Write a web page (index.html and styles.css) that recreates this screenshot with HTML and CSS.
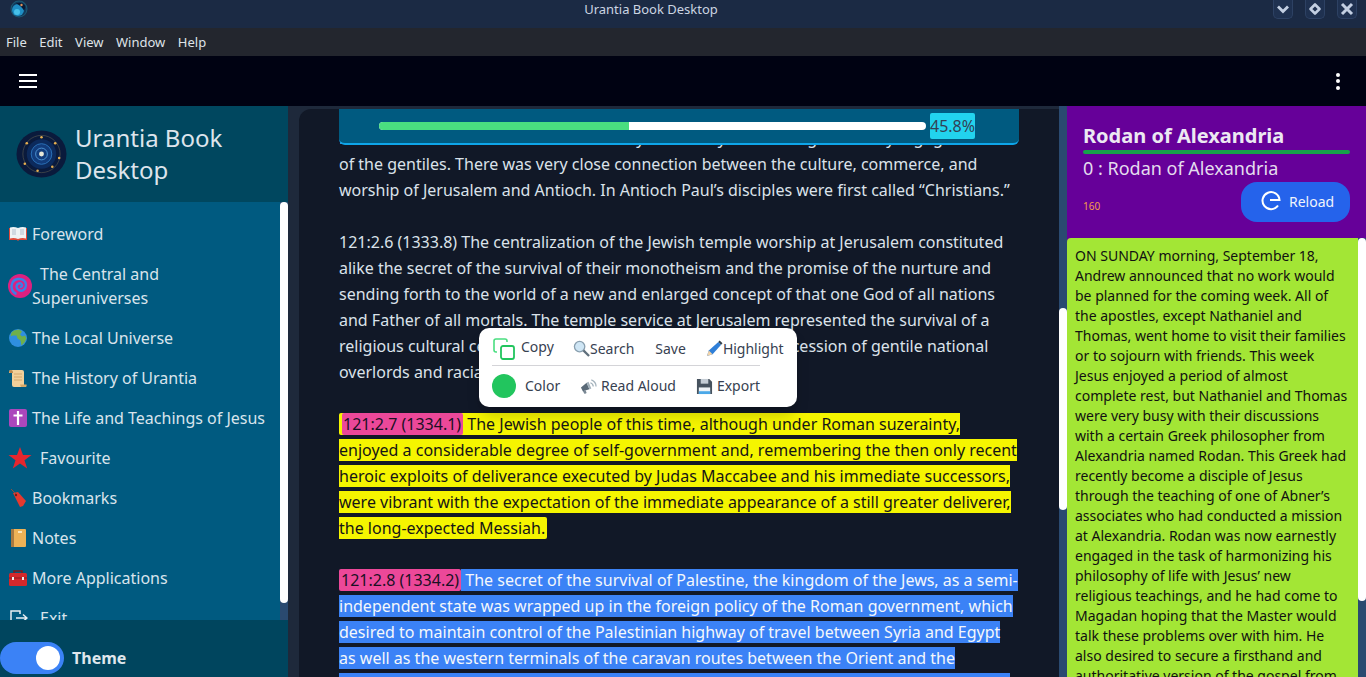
FILE: index.html

```html
<!DOCTYPE html>
<html lang="en">
<head>
    <meta charset="UTF-8">
    <title>Urantia Book Desktop</title>
    <link rel="stylesheet" href="styles.css">
</head>
<body>

<div class="titlebar">
    <svg class="app-icon" viewBox="0 0 18 18">
        <circle cx="9" cy="9" r="8.500" fill="#1d5a74"/>
        <circle cx="9" cy="9" r="7.500" fill="#123a5c"/>
        <circle cx="8" cy="10" r="6" fill="#1f8ec4"/>
        <circle cx="7" cy="12" r="3" fill="#46c0e8"/>
        <path d="M6 3.500q6-2 9 2 1 3-1 5-3-5-8-7z" fill="#0a1a34"/>
        <circle cx="11.500" cy="5" r="1.200" fill="#e0905a"/>
    </svg>
    <div class="app-name">Urantia Book Desktop</div>
    <div class="win-btns">
        <div class="win-btn">
            <svg viewBox="0 0 18 18"><path d="M4 6.500l5 5 5-5" fill="none" stroke="#c3cfe2" stroke-width="2.800"/></svg>
        </div>
        <div class="win-btn">
            <svg viewBox="0 0 18 18"><path d="M9 4.500L13.500 9 9 13.500 4.500 9z" fill="none" stroke="#c3cfe2" stroke-width="2.600" stroke-linejoin="round"/></svg>
        </div>
        <div class="win-btn">
            <svg viewBox="0 0 18 18"><path d="M4 4l10 10M14 4L4 14" fill="none" stroke="#c3cfe2" stroke-width="3"/></svg>
        </div>
    </div>
</div>

<div class="menubar">
    <span>File</span>
    <span>Edit</span>
    <span>View</span>
    <span>Window</span>
    <span>Help</span>
</div>

<div class="toolbar">
    <div class="burger"><i></i><i></i><i></i></div>
    <div class="kebab"><i></i><i></i><i></i></div>
</div>

<div class="main">

    <div class="sidebar">
        <div class="brand">
            <svg class="brand-logo" viewBox="0 0 52 48">
                <ellipse cx="26" cy="24" rx="25.500" ry="24" fill="#0a1a3c"/>
                <circle cx="26" cy="24" r="19" fill="none" stroke="#5a5a50" stroke-width=".6"/>
                <circle cx="26" cy="24" r="15" fill="#0c2a5c"/>
                <circle cx="26" cy="24" r="10.500" fill="#123c7c" stroke="#2a70b8"/>
                <circle cx="26" cy="24" r="6" fill="none" stroke="#4a90d0"/>
                <circle cx="26" cy="24" r="2.500" fill="#e8e8d8"/>
                <g fill="#e8b050">
                    <circle cx="26" cy="7" r="1.300"/><circle cx="40" cy="13" r="1.300"/>
                    <circle cx="44" cy="28" r="1.300"/><circle cx="37" cy="37" r="1.300"/>
                    <circle cx="22" cy="41" r="1.300"/><circle cx="9" cy="34" r="1.300"/>
                    <circle cx="11" cy="13" r="1.300"/>
                </g>
            </svg>
            <div class="brand-name">Urantia Book Desktop</div>
        </div>

        <div class="side-body">
            <div class="side-menu">
                <div class="side-item">
                    <svg class="ico" viewBox="0 0 20 20"><path d="M1 4h8.500l.5 1 .5-1H19v12h-8l-1 1-1-1H1z" fill="#e04a3a"/><path d="M2 3.500q4-1 8 .5 4-1.500 8-.5v11q-4-1-8 .5-4-1.500-8-.5z" fill="#eef2f4"/><path d="M4 6h4M4 8h4M4 10h4M12 6h4M12 8h4M12 10h4" stroke="#9ab" stroke-width=".7"/></svg>
                    <span>Foreword</span>
                </div>
                <div class="side-item">
                    <svg class="ico ico-big" viewBox="0 0 24 24"><circle cx="12" cy="12" r="12" fill="#dd2080"/><path d="M12 12.500c1.500 1 3 -1 1.500 -2.500s-5 -.5 -5 2.500 4 5.500 7 3.500 3.500 -7 .5 -9.500-9.500-2-11.500 2-1 10 4 11.500" fill="none" stroke="#3a80e8" stroke-width="2.400"/></svg>
                    <span class="indent">The Central and Superuniverses</span>
                </div>
                <div class="side-item">
                    <svg class="ico" viewBox="0 0 20 20"><circle cx="10" cy="10" r="9" fill="#2f8fe0"/><path d="M6 2.500l5-1 3 2-2 3 2 2 3-1 1.500 3-2 4-3 3-1-5-3-2-1-3-4 0-2 1 1-4z" fill="#6fb04a"/></svg>
                    <span>The Local Universe</span>
                </div>
                <div class="side-item">
                    <svg class="ico" viewBox="0 0 20 20"><path d="M3 2h11q2 0 2 2v13q0 2-2 2H6q-2 0-2-2V5H1V4q0-2 2-2z" fill="#f2d09a"/><path d="M13 19h5q1-1 .5-2.500H12z" fill="#d8a868"/><path d="M6 6h8M6 9h8M6 12h8" stroke="#d0a468" stroke-width=".9"/><path d="M1 4q0-2 2-2t2 3H2z" fill="#b98a50"/></svg>
                    <span>The History of Urantia</span>
                </div>
                <div class="side-item">
                    <svg class="ico" viewBox="0 0 20 20"><rect x="1" y="1" width="18" height="18" rx="2" fill="#ab47bc"/><path d="M10 3v14M5.500 7.500h9" stroke="#fff" stroke-width="2.200"/></svg>
                    <span>The Life and Teachings of Jesus</span>
                </div>
                <div class="side-item">
                    <svg class="ico ico-big" viewBox="0 0 24 24"><path d="M12 1l3 8h8.500l-7 5.200 2.700 8.300L12 17.400 4.800 22.500l2.700-8.300-7-5.200H9z" fill="#e5262e"/></svg>
                    <span class="indent">Favourite</span>
                </div>
                <div class="side-item">
                    <svg class="ico" viewBox="0 0 20 20"><path d="M5 5l5-1 8 9-3 5-3 1z" fill="#e5392f"/><circle cx="8" cy="7" r="1.200" fill="#7a1a14"/><path d="M3 1l5 5" stroke="#8a5040" stroke-width="1"/></svg>
                    <span>Bookmarks</span>
                </div>
                <div class="side-item">
                    <svg class="ico" viewBox="0 0 20 20"><rect x="3" y="1" width="15" height="18" rx="1" fill="#eeb256"/><rect x="3" y="1" width="3" height="18" fill="#a87a42"/><rect x="10" y="3" width="4" height="2" fill="#fbe6bc"/></svg>
                    <span>Notes</span>
                </div>
                <div class="side-item">
                    <svg class="ico" viewBox="0 0 20 20"><path d="M6 5V3h8v2" fill="none" stroke="#7a1c1c" stroke-width="1.500"/><rect x="1" y="5" width="18" height="13" rx="1.500" fill="#d4282c"/><path d="M1 10h18" stroke="#8c1a1c"/><rect x="4" y="9" width="2" height="3" fill="#eee"/><rect x="14" y="9" width="2" height="3" fill="#eee"/></svg>
                    <span>More Applications</span>
                </div>
                <div class="side-item">
                    <svg class="ico" viewBox="0 0 20 20"><path d="M12 6V3H3v14h9v-3M8 10h11M15 6.500l4 3.500-4 3.500" fill="none" stroke="#e8eef2" stroke-width="1.500"/></svg>
                    <span class="indent">Exit</span>
                </div>
            </div>
            <div class="scroll side-scroll"><div class="thumb"></div></div>
        </div>

        <div class="side-foot">
            <div class="toggle"><div class="knob"></div></div>
            <b>Theme</b>
        </div>
    </div>

    <div class="reader">
        <div class="page">
            <div class="progress">
                <div class="bar"><div class="bar-fill"></div></div>
                <div class="pct">45.8%</div>
            </div>

            <div class="text">
                <p>Paul and his associates went out from Syria to carry the message to the synagogues<br>of the gentiles. There was very close connection between the culture, commerce, and worship of Jerusalem and Antioch. In Antioch Paul’s disciples were first called “Christians.”</p>

                <p>121:2.6 (1333.8) The centralization of the Jewish temple worship at Jerusalem constituted alike the secret of the survival of their monotheism and the promise of the nurture and sending forth to the world of a new and enlarged concept of that one God of all nations and Father of all mortals. The temple service at Jerusalem represented the survival of a religious cultural center in the face of the long unbroken succession of gentile national overlords and racial persecutors.</p>

                <p><span class="hl-yellow"><span class="ref ref-first">121:2.7 (1334.1)</span> The Jewish people of this time, although under Roman suzerainty, enjoyed a considerable degree of self-government and, remembering the then only recent heroic exploits of deliverance executed by Judas Maccabee and his immediate successors, were vibrant with the expectation of the immediate appearance of a still greater deliverer, the long-expected Messiah.</span></p>

                <p><span class="ref">121:2.8 (1334.2)</span><span class="hl-blue"> The secret of the survival of Palestine, the kingdom of the Jews, as a semi-independent state was wrapped up in the foreign policy of the Roman government, which desired to maintain control of the Palestinian highway of travel between Syria and Egypt as well as the western terminals of the caravan routes between the Orient and the<br>Occident. Rome held this highway open and the Jews were left to govern themselves here</span></p>
            </div>

            <div class="popup">
                <div class="pop-row pop-top">
                    <div class="pop-copy">
                        <svg class="pop-copy-ico" viewBox="0 0 22 22"><path d="M4 14H3q-2 0-2-2V3q0-2 2-2h9q2 0 2 2v1" fill="none" stroke="#4ade80" stroke-width="1.600"/><rect x="8" y="8" width="13" height="13" rx="2" fill="none" stroke="#22c55e" stroke-width="1.800"/></svg>
                        <span>Copy</span>
                    </div>
                    <div class="pop-item">
                        <svg class="pop-ico" viewBox="0 0 18 18"><circle cx="7" cy="7" r="5.500" fill="#cfe6f5" stroke="#8aa0b0" stroke-width="1.400"/><path d="M11 11l6 6" stroke="#5f6f7c" stroke-width="2.400"/></svg>
                        <span>Search</span>
                    </div>
                    <div class="pop-item">Save</div>
                    <div class="pop-item">
                        <svg class="pop-ico" viewBox="0 0 18 18"><path d="M1 17l2-6L13 2l3 3-9 10z" fill="#2f7fd8"/><path d="M13 2l1.500-1.500 3 3L16 5z" fill="#33404c"/><path d="M1 17l2-6 4 4z" fill="#f2d3a8"/></svg>
                        <span>Highlight</span>
                    </div>
                </div>
                <div class="pop-row pop-bottom">
                    <div class="pop-item pop-color">
                        <div class="dot"></div>
                        <span>Color</span>
                    </div>
                    <div class="pop-item">
                        <svg class="pop-ico" viewBox="0 0 18 18"><path d="M1 10l6-5 3 7-7 2z" fill="#5a6a78"/><path d="M7 5l3 7 2-1-3-7z" fill="#a2b0ba"/><path d="M3 14l2 3 2-1-1-3z" fill="#7a8894"/><path d="M11 5q3 1 3 4M12 2q5 2 5 7" fill="none" stroke="#a4b2bc" stroke-width="1.300"/></svg>
                        <span>Read Aloud</span>
                    </div>
                    <div class="pop-item">
                        <svg class="pop-ico" viewBox="0 0 18 18"><path d="M1 1h13l3 3v13H1z" fill="#46525e"/><rect x="5" y="1" width="8" height="5" fill="#c4ccd4"/><rect x="3" y="10" width="12" height="7" fill="#eef2f5"/><rect x="3" y="14" width="12" height="3" fill="#4aa8e8"/></svg>
                        <span>Export</span>
                    </div>
                </div>
            </div>
        </div>
        <div class="scroll page-scroll"><div class="thumb"></div></div>
    </div>

    <div class="panel">
        <div class="panel-head">
            <div class="panel-title">Rodan of Alexandria</div>
            <div class="panel-line"></div>
            <div class="panel-sub">0 : Rodan of Alexandria</div>
            <div class="panel-row">
                <span class="count">160</span>
                <div class="reload">
                    <svg viewBox="0 0 22 22"><path d="M18 16.500a8.500 8.500 0 1 1 1.500-5.500H10" fill="none" stroke="#fff" stroke-width="2"/></svg>
                    <span>Reload</span>
                </div>
            </div>
        </div>
        <div class="panel-body">
            <div class="panel-text">ON SUNDAY morning, September 18, Andrew announced that no work would be planned for the coming week. All of the apostles, except Nathaniel and Thomas, went home to visit their families or to sojourn with friends. This week Jesus enjoyed a period of almost complete rest, but Nathaniel and Thomas were very busy with their discussions with a certain Greek philosopher from Alexandria named Rodan. This Greek had recently become a disciple of Jesus through the teaching of one of Abner’s associates who had conducted a mission at Alexandria. Rodan was now earnestly engaged in the task of harmonizing his philosophy of life with Jesus’ new religious teachings, and he had come to Magadan hoping that the Master would talk these problems over with him. He also desired to secure a firsthand and authoritative version of the gospel from</div>
            <div class="scroll panel-scroll"><div class="thumb"></div></div>
        </div>
    </div>

</div>

</body>
</html>
```

FILE: styles.css

```css
*{
    margin: 0;
    padding: 0;
    box-sizing: border-box;
}
html, body{
    height: 100%;
    overflow: hidden;
}
body{
    display: flex;
    flex-direction: column;
    font-family: "Noto Sans", sans-serif;
    font-size: 16px;
    line-height: 24px;
    background: #111827;
}

/* window chrome */
.titlebar{
    height: 28px;
    flex: none;
    position: relative;
    display: flex;
    justify-content: space-between;
    background: #1b2a44;
}
.app-icon{
    width: 18px;
    height: 18px;
    margin-left: 10px;
}
.app-name{
    position: absolute;
    left: 0;
    right: 64px;
    top: 0;
    text-align: center;
    font-size: 13px;
    line-height: 19px;
    color: #ccd5e2;
}
.win-btns{
    display: flex;
    gap: 12px;
    padding-right: 9px;
}
.win-btn{
    width: 20px;
    height: 19px;
    border: 1px solid #2d4163;
    border-top: 0;
    border-radius: 0 0 5px 5px;
    background: #1f3150;
}
.win-btn svg{
    display: block;
    width: 18px;
    height: 18px;
}
.menubar{
    height: 28px;
    flex: none;
    display: flex;
    gap: 12.500px;
    padding-left: 6px;
    background: #23262e;
    font-size: 13px;
    line-height: 28px;
    color: #dfe3e8;
}
.toolbar{
    height: 50px;
    flex: none;
    display: flex;
    justify-content: space-between;
    align-items: center;
    padding: 0 26px 0 19px;
    background: #000212;
}
.burger i{
    display: block;
    width: 18px;
    height: 2px;
    margin: 4px 0;
    background: #fff;
}
.kebab i{
    display: block;
    width: 4px;
    height: 4px;
    margin: 2.500px 0;
    border-radius: 50%;
    background: #fff;
}

.main{
    flex: 1;
    min-height: 0;
    display: flex;
}

/* scrollbars */
.scroll{
    width: 8px;
    flex: none;
    background: #2a4a70;
}
.thumb{
    width: 8px;
    background: #fff;
    border-radius: 4px;
}

/* left side */
.sidebar{
    width: 288px;
    flex: none;
    display: flex;
    flex-direction: column;
    background: #005a80;
}
.brand{
    height: 96px;
    flex: none;
    display: flex;
    align-items: center;
    gap: 8px;
    padding: 0 0 0 16px;
    background: #00475f;
}
.brand-logo{
    width: 51px;
    height: 48px;
    flex: none;
}
.brand-name{
    width: 190px;
    font-size: 24px;
    line-height: 32px;
    color: #dde4ec;
}
.side-body{
    flex: 1;
    min-height: 0;
    display: flex;
}
.side-menu{
    flex: 1;
    overflow: hidden;
    padding-top: 12px;
}
.side-item{
    display: flex;
    align-items: center;
    padding: 8px 10px 8px 8px;
    color: #d9e4ec;
}
.ico{
    width: 20px;
    height: 20px;
    flex: none;
    margin-right: 4px;
}
.ico-big{
    width: 24px;
    height: 24px;
    margin-right: 0;
}
.indent{
    text-indent: 8px;
}
.side-scroll .thumb{
    height: 401px;
}
.side-foot{
    height: 57px;
    flex: none;
    display: flex;
    align-items: flex-start;
    gap: 8px;
    padding-top: 22px;
    background: #00455e;
    color: #dfe6ec;
}
.toggle{
    width: 64px;
    height: 32px;
    padding: 4px;
    border-radius: 16px;
    background: #3b82f6;
}
.knob{
    width: 24px;
    height: 24px;
    margin-left: 32px;
    border-radius: 50%;
    background: #fff;
}
.side-foot b{
    line-height: 32px;
}

/* reader */
.reader{
    width: 779px;
    flex: none;
    display: flex;
    padding: 3px 0 0 11px;
    background: #1e293b;
}
.page{
    flex: 1;
    position: relative;
    overflow: hidden;
    padding: 16px 40px 0;
    border-radius: 12px 0 0 0;
    background: #111827;
}
.page-scroll{
    margin-top: -3px;
}
.page-scroll .thumb{
    height: 202px;
    margin-top: 202px;
}
.text{
    line-height: 26px;
    color: #dbe2ea;
}
.text p{
    margin-bottom: 26px;
}
.hl-yellow{
    padding: 0 2px 0 3px;
    background: #f5f500;
    color: #151515;
    border-radius: 2px;
}
.hl-blue{
    background: #3b82f6;
    color: #f4f7fb;
}
.ref{
    padding: 0 2px;
    background: #ec4899;
    color: #1a1024;
    border-radius: 2px;
}
.ref-first{
    padding: 0 2px 0 1px;
}
.progress{
    position: absolute;
    left: 40px;
    top: 0;
    width: 680px;
    height: 36px;
    display: flex;
    align-items: center;
    padding-left: 40px;
    border-bottom: 2px solid #0ea5e9;
    border-radius: 0 0 6px 6px;
    background: #005a80;
}
.bar{
    width: 547px;
    height: 8px;
    border-radius: 4px;
    overflow: hidden;
    background: #fff;
}
.bar-fill{
    width: 250px;
    height: 8px;
    background: #4ade80;
}
.pct{
    margin-left: 4px;
    width: 45px;
    height: 26px;
    line-height: 26px;
    border-radius: 2px;
    background: #22d3ee;
    color: #334155;
}

/* selection popup */
.popup{
    position: absolute;
    left: 180px;
    top: 219px;
    width: 318px;
    height: 79px;
    padding: 0 13px;
    border-radius: 10px;
    background: #fff;
    box-shadow: 0 10px 15px -3px rgba(0,0,0,.2), 0 4px 6px -4px rgba(0,0,0,.2);
    font-size: 14px;
    line-height: 20px;
    color: #374151;
}
.pop-row{
    display: flex;
    align-items: center;
}
.pop-top{
    height: 37px;
    width: 292px;
    padding-top: 4px;
}
.pop-bottom{
    width: 268px;
    height: 40px;
    border-top: 1px solid #d4d4d8;
    padding-top: 1px;
}
.pop-item{
    display: flex;
    align-items: center;
}
.pop-copy{
    display: flex;
    gap: 6px;
    align-items: flex-start;
    width: 81px;
    padding-left: 1px;
}
.pop-copy span{
    margin-top: -1px;
}
.pop-copy-ico{
    width: 22px;
    height: 22px;
    flex: none;
}
.pop-ico{
    width: 17px;
    height: 17px;
    flex: none;
}
.pop-top .pop-item:nth-child(3){
    margin-left: 21px;
    margin-right: 20px;
}
.pop-color{
    gap: 9px;
    width: 88px;
}
.dot{
    width: 24px;
    height: 24px;
    border-radius: 50%;
    background: #22c55e;
}
.pop-bottom .pop-item:nth-child(2){
    gap: 4px;
    width: 116px;
}
.pop-bottom .pop-item:nth-child(3){
    gap: 4px;
}

/* right side */
.panel{
    flex: 1;
    min-width: 0;
    display: flex;
    flex-direction: column;
    background: #660099;
}
.panel-head{
    height: 132px;
    flex: none;
    padding: 16px 16px 0;
}
.panel-title{
    font-size: 20px;
    line-height: 28px;
    font-weight: 700;
    color: #ece8f2;
}
.panel-line{
    height: 4px;
    border-radius: 2px;
    background: #16a34a;
}
.panel-sub{
    font-size: 18px;
    line-height: 28px;
    color: #e4dcee;
}
.panel-row{
    display: flex;
    justify-content: space-between;
    align-items: center;
}
.count{
    font-size: 10px;
    color: #f59e4b;
    padding-top: 8px;
}
.reload{
    width: 109px;
    height: 40px;
    display: flex;
    align-items: center;
    gap: 7px;
    padding-left: 19px;
    border-radius: 16px;
    background: #2563eb;
    font-size: 14px;
    color: #f0f4fc;
}
.reload svg{
    width: 22px;
    height: 22px;
    margin-top: -4px;
}
.panel-body{
    flex: 1;
    min-height: 0;
    display: flex;
}
.panel-text{
    flex: 1;
    overflow: hidden;
    padding: 8px;
    border-radius: 4px 0 0 0;
    background: #a3e635;
    font-size: 14px;
    line-height: 20px;
    color: #111;
}
.panel-scroll .thumb{
    height: 363px;
}
```
